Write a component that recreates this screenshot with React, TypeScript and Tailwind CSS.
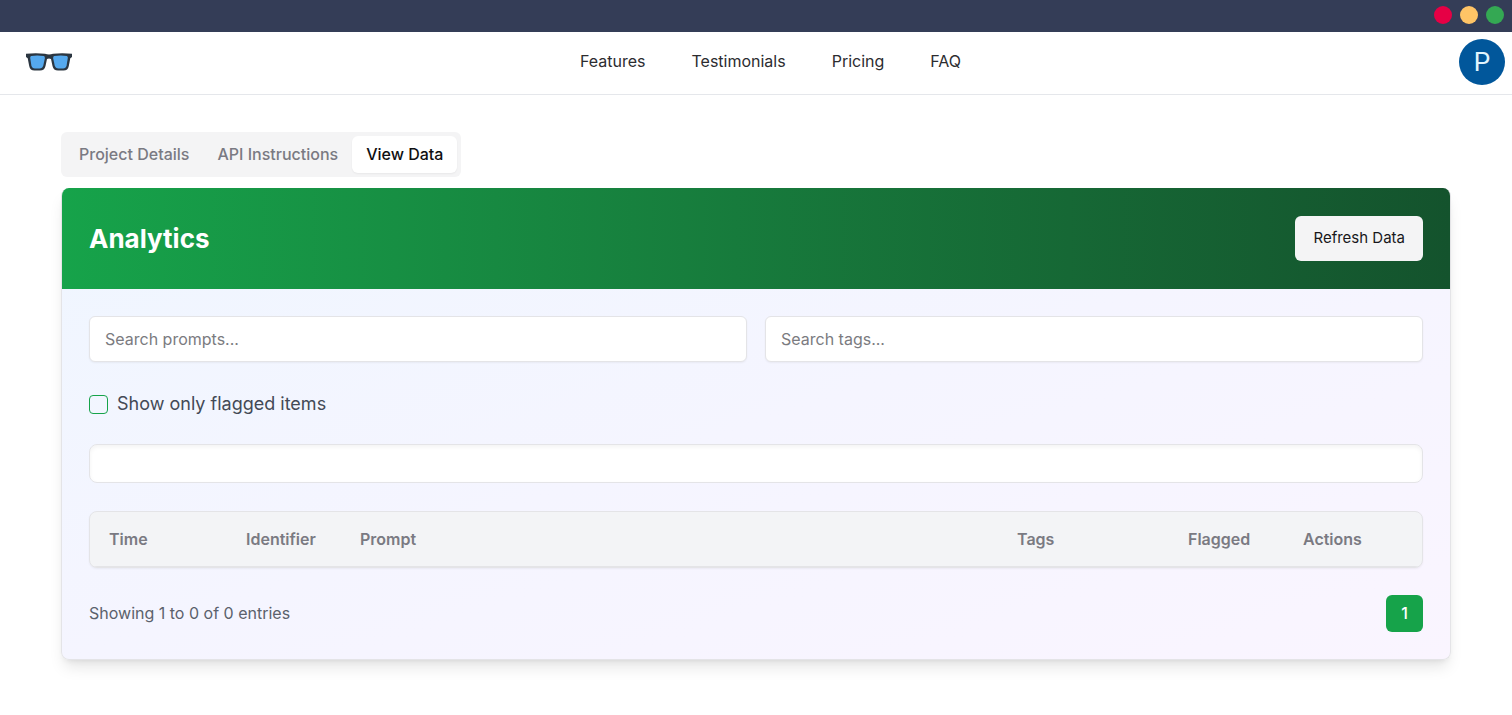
import { useState } from 'react';

type TabId = 'details' | 'api' | 'data';

const NAV_LINKS = [
  { label: 'Features', href: '#features' },
  { label: 'Testimonials', href: '#testimonials' },
  { label: 'Pricing', href: '#pricing' },
  { label: 'FAQ', href: '#faq' }
];

const TABS: { id: TabId; label: string }[] = [
  { id: 'details', label: 'Project Details' },
  { id: 'api', label: 'API Instructions' },
  { id: 'data', label: 'View Data' }
];

const COLUMNS = [
  { label: 'Time', width: 'w-[137px]' },
  { label: 'Identifier', width: 'w-[114px]' },
  { label: 'Prompt', width: '' },
  { label: 'Tags', width: 'w-[171px]' },
  { label: 'Flagged', width: 'w-[115px]' },
  { label: 'Actions', width: 'w-[138px]' }
];

const INPUT_CLASS =
  'h-[46px] w-full rounded-md border border-[#e4e4e7] bg-white px-[15px] text-base text-gray-800 shadow-xs outline-none placeholder:text-[#7b7b80] focus:border-[#16a34a]';

function GlassesLogo() {
  return (
    <svg viewBox="0 0 46 18" className="h-[18px] w-[46px]" aria-hidden="true">
      <path
        d="M0 .8Q10-.4 19 .8Q23 2.200 27 .8Q36-.4 46 .8V4L44.300 5.200L42.800 13Q42 17.500 37.500 17.500H32Q27.500 17.500 26.500 13L25 6Q23 4.800 21 6L19.500 13Q18.500 17.500 14 17.500H8.500Q4 17.500 3.200 13L1.700 5.200L0 4Z"
        fill="#2b3641"
      />
      <path d="M5.200 3.100Q11 2 17.800 3.100Q19.200 3.400 18.800 5.500L17.300 12.500Q16.500 15.500 13.500 15.500H9Q6 15.500 5.400 12.500L4.200 5Q4 3.400 5.200 3.100Z" fill="#55a9ee" />
      <path d="M28.200 3.100Q35 2 40.800 3.100Q42 3.400 41.800 5L40.600 12.500Q40 15.500 37 15.500H32.500Q29.500 15.500 28.700 12.500L27.200 5.500Q26.800 3.400 28.200 3.100Z" fill="#55a9ee" />
    </svg>
  );
}

function WindowBar() {
  return (
    <div className="flex h-8 items-center justify-end gap-2 bg-[#343d57] px-2 pb-[2px]">
      <span className="size-[18px] rounded-full bg-[#e60045]" />
      <span className="size-[18px] rounded-full bg-[#ffc466]" />
      <span className="size-[18px] rounded-full bg-[#34a853]" />
    </div>
  );
}

function Header() {
  return (
    <header className="grid h-[63px] grid-cols-[1fr_auto_1fr] items-center border-b border-gray-200 bg-white pr-[7px] pb-[2px] pl-[26px]">
      <a href="#home" aria-label="Home" className="justify-self-start">
        <GlassesLogo />
      </a>
      <nav className="flex gap-[46px] pb-[2px] pl-[10px] text-base text-[#2c2c30]">
        {NAV_LINKS.map((link) => (
          <a key={link.label} href={link.href} className="hover:text-green-700">
            {link.label}
          </a>
        ))}
      </nav>
      <button
        type="button"
        aria-label="Account"
        className="flex size-[46px] items-center justify-center justify-self-end rounded-full bg-[#01579b] font-[Roboto,sans-serif] text-[26px] text-[#e1f5fe]"
      >
        P
      </button>
    </header>
  );
}

function AnalyticsCard() {
  const [prompt, setPrompt] = useState('');
  const [tag, setTag] = useState('');
  const [flaggedOnly, setFlaggedOnly] = useState(false);

  return (
    <section className="overflow-hidden rounded-lg border-x border-b border-[#e4e4e7] bg-linear-to-br from-[#eff6ff] via-[#f5f5ff] to-[#faf5ff] shadow-lg">
      <div className="flex items-center justify-between bg-linear-to-r from-[#16a34a] to-[#14532d] px-[27px] py-7">
        <h1 className="text-[26px] leading-8 font-bold text-white">Analytics</h1>
        <button
          type="button"
          className="h-[45px] rounded-md bg-[#f4f4f5] px-[18px] text-[15px] text-[#18181b] hover:bg-gray-200"
        >
          Refresh Data
        </button>
      </div>

      <div className="p-[27px]">
        <div className="grid grid-cols-2 gap-[18px]">
          <input
            type="text"
            aria-label="Search prompts"
            placeholder="Search prompts..."
            value={prompt}
            onChange={(event) => setPrompt(event.target.value)}
            className={INPUT_CLASS}
          />
          <input
            type="text"
            aria-label="Search tags"
            placeholder="Search tags..."
            value={tag}
            onChange={(event) => setTag(event.target.value)}
            className={INPUT_CLASS}
          />
        </div>

        <label className="mt-7 flex w-fit items-center gap-[9px] text-lg text-[#434956]">
          <input
            type="checkbox"
            checked={flaggedOnly}
            onChange={(event) => setFlaggedOnly(event.target.checked)}
            className="size-[19px] appearance-none rounded-sm border border-[#16a34a] checked:bg-[#16a34a]"
          />
          Show only flagged items
        </label>

        <div className="mt-[26px] h-[39px] rounded-lg border border-[#e4e4e7] bg-white shadow-inner" />

        <div className="mt-7 overflow-hidden rounded-lg border border-[#e4e4e7] bg-gray-100 shadow-xs">
          <table className="w-full table-fixed text-left text-base">
            <thead>
              <tr className="h-[54px] border-b border-[#e4e4e7]">
                {COLUMNS.map((column) => (
                  <th key={column.label} scope="col" className={`pl-[19px] font-semibold text-[#7a7a82] ${column.width}`}>
                    {column.label}
                  </th>
                ))}
              </tr>
            </thead>
          </table>
        </div>

        <div className="mt-[27px] flex items-center justify-between">
          <p className="text-base text-[#5b616c]">Showing 1 to 0 of 0 entries</p>
          <button type="button" className="size-[37px] rounded-md bg-[#16a34a] text-base font-medium text-white">
            1
          </button>
        </div>
      </div>
    </section>
  );
}

export default function App() {
  const [activeTab, setActiveTab] = useState<TabId>('data');

  return (
    <div className="min-h-screen bg-white font-[Inter,sans-serif]">
      <WindowBar />
      <Header />
      <main className="px-[61px] pt-[37px] pb-[54px]">
        <div role="tablist" className="mb-[11px] inline-flex h-[45px] items-center rounded-md bg-[#f4f4f5] p-1 align-top">
          {TABS.map((tab) => (
            <button
              key={tab.id}
              type="button"
              role="tab"
              aria-selected={activeTab === tab.id}
              onClick={() => setActiveTab(tab.id)}
              className={`h-[37px] rounded-md px-[14px] pb-[2px] text-base font-medium ${
                activeTab === tab.id ? 'bg-white text-[#0f0f12] shadow-xs' : 'text-[#7a7a82]'
              }`}
            >
              {tab.label}
            </button>
          ))}
        </div>
        {activeTab === 'data' && <AnalyticsCard />}
      </main>
    </div>
  );
}
